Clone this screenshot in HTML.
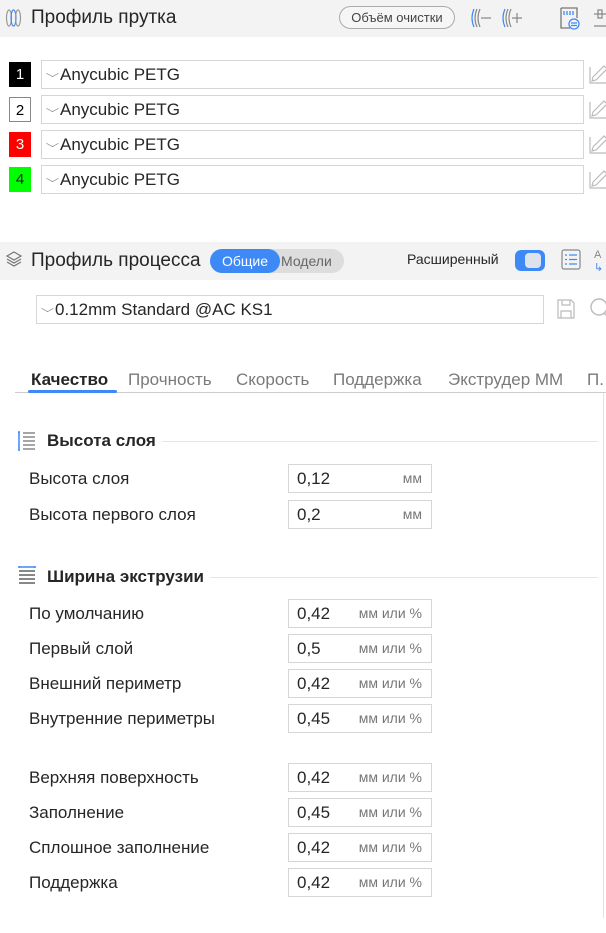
<!DOCTYPE html>
<html><head><meta charset="utf-8">
<style>
*{margin:0;padding:0;box-sizing:border-box}
body{width:606px;height:933px;background:#fff;font-family:"Liberation Sans",sans-serif;color:#262626;position:relative;overflow:hidden}
.a{position:absolute}
.bar{left:0;width:606px;background:#f3f3f3}
.h{font-size:19px;color:#262626}
.sel{border:1px solid #d6d6d6;background:#fff;height:29px;font-size:17px;line-height:27px;padding-left:5px;color:#262626}
.chev{display:inline-block;width:9px;height:9px;border-right:1px solid #888;border-bottom:1px solid #888;transform:scale(1,.55) rotate(45deg);margin:0 3px 4px 1px;vertical-align:middle}
.num{width:22px;height:25px;font-size:15px;text-align:center;line-height:25px}
.lab{left:29px;font-size:17px;color:#262626}
.fld{left:288px;width:144px;height:29px;border:1px solid #d6d6d6;font-size:17px;line-height:27px;padding-left:8px}
.fld span{position:absolute;right:9px;font-size:14px;color:#777}
.sec{font-size:17px;font-weight:bold;color:#262626;display:flex;align-items:center;width:551px}
.sec i{flex:1;height:1px;background:#e6e6e6;margin-left:6px}
.tab{font-size:17px;color:#7a7a7a;top:370px}
</style></head><body>
<div class="a bar" style="top:0;height:37px"></div>
<svg class="a" style="left:5px;top:8px" width="20" height="20" viewBox="0 0 20 20" fill="none" stroke-width="1.2"><ellipse cx="4" cy="10" rx="2.5" ry="8" stroke="#999"/><ellipse cx="8.5" cy="10" rx="2.5" ry="8" stroke="#3d8af7"/><ellipse cx="13" cy="10" rx="2.5" ry="8" stroke="#999"/></svg>
<div class="a h" style="left:31px;top:7px">Профиль прутка</div>
<div class="a" style="left:339px;top:6px;width:116px;height:23px;border:1px solid #aaa;border-radius:12px;font-size:13px;text-align:center;line-height:21px;color:#444;background:#f6f6f6">Объём очистки</div>
<svg class="a" style="left:469px;top:6px" width="24" height="24" viewBox="0 0 24 24" fill="none" stroke-width="1.2"><path d="M5 3q-4 9 0 18" stroke="#3d8af7"/><path d="M8 3q-4 9 0 18M11 3q-4 9 0 18" stroke="#888"/><path d="M12 12h10" stroke="#888"/></svg>
<svg class="a" style="left:500px;top:6px" width="24" height="24" viewBox="0 0 24 24" fill="none" stroke-width="1.2"><path d="M5 3q-4 9 0 18" stroke="#3d8af7"/><path d="M8 3q-4 9 0 18M11 3q-4 9 0 18" stroke="#888"/><path d="M12 12h10M17 7v10" stroke="#888"/></svg>
<svg class="a" style="left:558px;top:5px" width="24" height="26" viewBox="0 0 24 26" fill="none" stroke-width="1.3"><path d="M3 3h16v10M3 3v20h9" stroke="#777"/><path d="M6 6v4M9 6v4M12 6v4M15 6v4" stroke="#3d8af7"/><circle cx="16" cy="19" r="5" stroke="#3d8af7"/><path d="M13 18h6M13 20.5h6" stroke="#3d8af7"/></svg>
<svg class="a" style="left:594px;top:6px" width="12" height="26" viewBox="0 0 12 26" fill="none" stroke="#888" stroke-width="1.2"><path d="M0 8h12M4 4h4v8h-4zM0 20h12"/></svg>

<div class="a num" style="left:9px;top:62px;background:#000;color:#fff">1</div>
<div class="a num" style="left:9px;top:97px;background:#fff;color:#000;border:1px solid #888">2</div>
<div class="a num" style="left:9px;top:132px;background:#ff0000;color:#fff">3</div>
<div class="a num" style="left:9px;top:167px;background:#00ff00;color:#222">4</div>
<div class="a sel" style="left:41px;top:60px;width:543px"><i class="chev"></i>Anycubic PETG</div>
<div class="a sel" style="left:41px;top:95px;width:543px"><i class="chev"></i>Anycubic PETG</div>
<div class="a sel" style="left:41px;top:130px;width:543px"><i class="chev"></i>Anycubic PETG</div>
<div class="a sel" style="left:41px;top:165px;width:543px"><i class="chev"></i>Anycubic PETG</div>
<svg class="a" style="left:588px;top:63px" width="18" height="130" viewBox="0 0 18 130" fill="none" stroke="#bbb" stroke-width="1.2"><g id="p"><path d="M2 4v16h16"/><path d="M4 18l1-4 11-11 3 3-11 11z"/></g><use href="#p" y="35"/><use href="#p" y="70"/><use href="#p" y="105"/></svg>

<div class="a bar" style="top:242px;height:38px"></div>
<svg class="a" style="left:5px;top:250px" width="18" height="18" viewBox="0 0 18 18" fill="none" stroke="#777" stroke-width="1.2"><path d="M9 2l7 4-7 4-7-4z"/><path d="M2 9l7 4 7-4"/><path d="M2 12l7 4 7-4"/></svg>
<div class="a h" style="left:31px;top:250px">Профиль процесса</div>
<div class="a" style="left:210px;top:249px;width:134px;height:24px;border-radius:12px;background:#ddd"></div>
<div class="a" style="left:210px;top:249px;width:70px;height:24px;border-radius:12px;background:#3d8af7;color:#fff;font-size:14px;text-align:center;line-height:24px">Общие</div>
<div class="a" style="left:281px;top:249px;font-size:14px;line-height:24px;color:#666">Модели</div>
<div class="a" style="left:407px;top:251px;font-size:14px;color:#262626">Расширенный</div>
<div class="a" style="left:515px;top:250px;width:30px;height:21px;border-radius:6px;background:#3d8af7"><div style="position:absolute;left:10px;top:3px;width:16px;height:15px;border-radius:4px;background:#dde3ec"></div></div>
<svg class="a" style="left:561px;top:249px" width="20" height="22" viewBox="0 0 20 22" fill="none" stroke-width="1.2"><rect x="1" y="1" width="18" height="19" rx="2" stroke="#888"/><path d="M4 6h2M8 6h8M4 10.5h2M8 10.5h8M4 15h2M8 15h8" stroke="#3d8af7"/></svg>
<div class="a" style="left:594px;top:249px;font-size:11px;color:#888">A<br><span style="color:#3d8af7">↳</span></div>

<div class="a sel" style="left:36px;top:295px;width:508px"><i class="chev"></i>0.12mm Standard @AC KS1</div>
<svg class="a" style="left:556px;top:298px" width="20" height="22" viewBox="0 0 20 22" fill="none" stroke="#bbb" stroke-width="1.2"><path d="M2 2h13l3 3v15H2z"/><path d="M6 2v5h8V2M5 20v-7h10v7"/></svg>
<svg class="a" style="left:588px;top:297px" width="18" height="24" viewBox="0 0 18 24" fill="none" stroke="#bbb" stroke-width="1.4"><circle cx="11" cy="10" r="8"/><path d="M16 16l4 4"/></svg>

<div class="a tab" style="left:31px;color:#262626;font-weight:bold">Качество</div>
<div class="a tab" style="left:128px">Прочность</div>
<div class="a tab" style="left:236px">Скорость</div>
<div class="a tab" style="left:333px">Поддержка</div>
<div class="a tab" style="left:448px">Экструдер ММ</div>
<div class="a tab" style="left:587px">П.</div>
<div class="a" style="left:15px;top:392px;width:591px;height:1px;background:#ccc"></div>
<div class="a" style="left:28px;top:390px;width:89px;height:3px;background:#3d8af7;border-radius:2px"></div>
<div class="a" style="left:603px;top:393px;width:1px;height:525px;background:#e2e2e2"></div>

<svg class="a" style="left:17px;top:430px" width="20" height="22" viewBox="0 0 20 22" fill="none" stroke-width="1.5"><path d="M2 2v18M1 2h2M1 20h2" stroke="#3d8af7"/><path d="M6 3h12M6 7h12M6 11h12M6 15h12M6 19h12" stroke="#888"/></svg>
<div class="a sec" style="left:47px;top:431px">Высота слоя<i></i></div>
<div class="a lab" style="top:469px">Высота слоя</div>
<div class="a fld" style="top:464px">0,12<span>мм</span></div>
<div class="a lab" style="top:505px">Высота первого слоя</div>
<div class="a fld" style="top:500px">0,2<span>мм</span></div>

<svg class="a" style="left:17px;top:565px" width="20" height="22" viewBox="0 0 20 22" fill="none" stroke-width="1.5"><path d="M2 2h16M2 1v2M18 1v2" stroke="#3d8af7"/><path d="M2 6h16M2 10h16M2 14h16M2 18h16" stroke="#888" stroke-width="2"/></svg>
<div class="a sec" style="left:47px;top:567px">Ширина экструзии<i></i></div>

<div class="a lab" style="top:604px">По умолчанию</div>
<div class="a fld" style="top:599px">0,42<span>мм или %</span></div>
<div class="a lab" style="top:639px">Первый слой</div>
<div class="a fld" style="top:634px">0,5<span>мм или %</span></div>
<div class="a lab" style="top:674px">Внешний периметр</div>
<div class="a fld" style="top:669px">0,42<span>мм или %</span></div>
<div class="a lab" style="top:709px">Внутренние периметры</div>
<div class="a fld" style="top:704px">0,45<span>мм или %</span></div>
<div class="a lab" style="top:768px">Верхняя поверхность</div>
<div class="a fld" style="top:763px">0,42<span>мм или %</span></div>
<div class="a lab" style="top:803px">Заполнение</div>
<div class="a fld" style="top:798px">0,45<span>мм или %</span></div>
<div class="a lab" style="top:838px">Сплошное заполнение</div>
<div class="a fld" style="top:833px">0,42<span>мм или %</span></div>
<div class="a lab" style="top:873px">Поддержка</div>
<div class="a fld" style="top:868px">0,42<span>мм или %</span></div>
</body></html>
